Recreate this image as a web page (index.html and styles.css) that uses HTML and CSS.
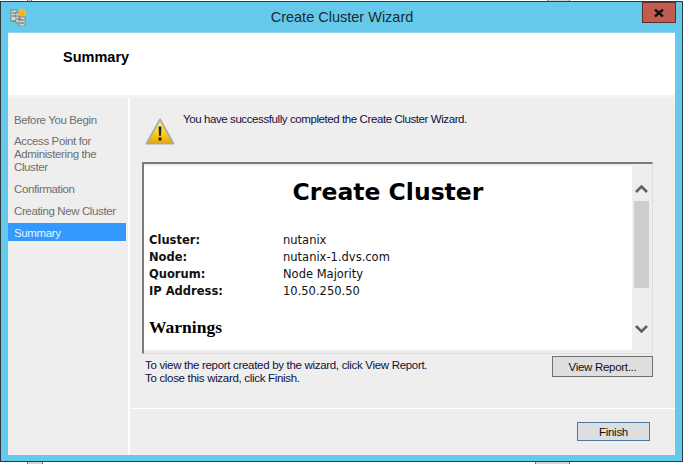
FILE: index.html
```html
<!DOCTYPE html>
<html lang="en">
<head>
<meta charset="utf-8">
<title>Create Cluster Wizard</title>
<link rel="stylesheet" href="styles.css">
</head>
<body>
<span class="peek peek-tl"></span>
<span class="peek peek-tr"></span>
<div class="window">
  <div class="titlebar">
    <svg class="app-icon" width="17" height="18" viewBox="0 0 17 18">
      <rect x="1" y="2" width="6" height="11" fill="#d8dcd8" stroke="#7c8480"/>
      <rect x="6" y="5" width="6" height="10" fill="#e4e6e2" stroke="#7c8480"/>
      <rect x="9" y="9" width="6" height="9" fill="#d8dad6" stroke="#7c8480"/>
      <path d="M2 5h4M2 8h4M7 8h4M7 11h4M10 12h4M10 15h4" stroke="#555c58"/>
      <rect x="3" y="12" width="2" height="2" fill="#4cab3c"/>
      <circle cx="12" cy="5" r="3.6" fill="#f5b324"/>
      <path d="M12 0v2M16.500 5h-2M15 2l-1 1M9 2l1 1M15 8l-1-1" stroke="#f8c846"/>
    </svg>
    <div class="title">Create Cluster Wizard</div>
    <div class="close"><svg width="10" height="8" viewBox="0 0 10 8"><path d="M1 .5l8 7M9 .5l-8 7" stroke="#111" stroke-width="2.400" fill="none"/></svg></div>
  </div>
  <div class="client">
    <header class="header"><h1 class="heading">Summary</h1></header>
    <div class="body">
      <nav class="steps">
        <div class="step">Before You Begin</div>
        <div class="step">Access Point for Administering the Cluster</div>
        <div class="step">Confirmation</div>
        <div class="step step-last">Creating New Cluster</div>
        <div class="step current">Summary</div>
      </nav>
      <main class="panel">
        <div class="top">
          <div class="message">
            <svg class="warn" width="30" height="28" viewBox="0 0 32 30">
              <defs><linearGradient id="y" x1="0" y1="0" x2="0" y2="1"><stop offset="0" stop-color="#fff3a0"/><stop offset=".5" stop-color="#fcd320"/><stop offset="1" stop-color="#eda500"/></linearGradient></defs>
              <path d="M16 1.500L30.500 27.500H1.500Z" fill="url(#y)" stroke="#a9a9a9" stroke-width="2" stroke-linejoin="round"/>
              <path d="M14.500 9h3l-.5 10h-2Z" fill="#222"/>
              <circle cx="16" cy="22.500" r="1.800" fill="#222"/>
            </svg>
            <p class="message-text">You have successfully completed the Create Cluster Wizard.</p>
          </div>
          <div class="report">
            <div class="report-inner">
              <div class="doc">
                <h2 class="doc-title">Create Cluster</h2>
                <dl class="facts">
                  <dt>Cluster:</dt><dd>nutanix</dd>
                  <dt>Node:</dt><dd>nutanix-1.dvs.com</dd>
                  <dt>Quorum:</dt><dd>Node Majority</dd>
                  <dt>IP Address:</dt><dd>10.50.250.50</dd>
                </dl>
                <h3 class="doc-sub">Warnings</h3>
              </div>
              <div class="scrollbar">
                <svg class="arrow" width="15" height="12" viewBox="0 0 15 12"><path d="M2 9l5.500-5.500L13 9" fill="none" stroke="#606060" stroke-width="2.600"/></svg>
                <div class="thumb"></div>
                <svg class="arrow arrow-down" width="15" height="12" viewBox="0 0 15 12"><path d="M2 3l5.500 5.500L13 3" fill="none" stroke="#606060" stroke-width="2.600"/></svg>
              </div>
            </div>
          </div>
          <div class="under">
            <p class="hint">To view the report created by the wizard, click View Report.<br>To close this wizard, click Finish.</p>
            <button class="btn btn-report" type="button">View Report...</button>
          </div>
        </div>
        <div class="bottom">
          <button class="btn btn-finish" type="button">Finish</button>
        </div>
      </main>
    </div>
  </div>
</div>
<span class="peek peek-bl"></span>
<span class="peek peek-br"></span>
</body>
</html>
```
FILE: styles.css
```css
* { box-sizing: border-box; }
html, body { margin: 0; padding: 0; background: #fff; }
body { position: relative; width: 683px; height: 464px; overflow: hidden; font-family: "Liberation Sans", Arial, sans-serif; }

.peek { position: absolute; height: 2px; background: #d4d4d4; border-left: 1px solid #777; border-right: 1px solid #777; }
.peek-tl { left: 27px; top: 0; width: 5px; height: 1px; }
.peek-tr { left: 547px; top: 0; width: 23px; height: 1px; }
.peek-bl { left: 27px; top: 462px; width: 16px; }
.peek-br { left: 535px; top: 462px; width: 35px; }

.window {
  margin-top: 1px;
  width: 683px;
  height: 461px;
  border: 1px solid #2d3a42;
  background: #65c9ec;
  padding: 0 7px 6px 7px;
  display: flex;
  flex-direction: column;
}

.titlebar { height: 30px; flex: none; display: flex; position: relative; justify-content: center; }
.app-icon { position: absolute; left: 2px; top: 6px; }
.title { font-size: 14.500px; line-height: 31px; color: #1d2a33; padding-left: 1px; }
.close {
  position: absolute; right: -1px; top: 0;
  width: 34px; height: 21px;
  background: #c25b50;
  border: 1px solid #5c2f2a;
  display: flex; align-items: center; justify-content: center;
}

.client { flex: 1; display: flex; flex-direction: column; background: #eee; min-height: 0; }
.header { height: 63px; flex: none; background: #fff; border-top: 1px solid #8fd3ec; padding: 15px 0 0 55px; }
.heading { margin: 0; font-size: 14.500px; line-height: 18px; font-weight: bold; color: #000; }

.body { flex: 1; display: flex; border-top: 3px solid #f3f3f3; min-height: 0; }
.steps { width: 120px; flex: none; padding-top: 16px; font-size: 11.500px; letter-spacing: -.38px; color: #6f6f6f; }
.step { line-height: 13px; padding: 0 6px; margin-bottom: 8px; }
.step:nth-child(n+2) { margin-bottom: 9px; }
.step.step-last { margin-bottom: 8px; }
.step.current { background: #3399ff; color: #e8f3ff; height: 18px; line-height: 20px; margin: -3px 2px 0 0; }

.panel { flex: 1; border-left: 2px solid #fff; display: flex; flex-direction: column; min-width: 0; }
.top { height: 310px; flex: none; padding: 0 22px 0 12px; }
.message { height: 64px; display: flex; padding-top: 12px; gap: 8px; }
.warn { margin-top: 8px; margin-left: 3px; flex: none; }
.message-text { margin: 2px 0 0; font-size: 11.500px; letter-spacing: -.41px; line-height: 14px; color: #10103a; }

.report {
  width: 511px; height: 192px;
  border-style: solid; border-width: 2px 1px 1px 2px;
  border-color: #7a7a7a #dedede #dedede #7a7a7a;
  padding: 2px 0 3px 0;
}
.report-inner { display: flex; height: 100%; }
.doc { width: 488px; background: #fff; padding: 0 0 0 5px; overflow: hidden; }
.doc-title { margin: 9px 0 0; font: bold 23.500px/34px "DejaVu Sans", Verdana, sans-serif; text-align: center; color: #000; padding-right: 5px; }
.facts {
  margin: 23px 0 0;
  display: grid; grid-template-columns: 134px 1fr;
  font: 11.500px/17px "DejaVu Sans", Verdana, sans-serif; color: #111;
}
.facts dt { font-weight: bold; }
.facts dd { margin: 0; }
.doc-sub { margin: 17px 0 0; font: bold 17.500px/20px "Liberation Serif", "Times New Roman", serif; color: #000; }

.scrollbar { width: 17px; padding-left: 1px; display: flex; flex-direction: column; align-items: center; }
.arrow { flex: none; margin-top: 17px; }
.thumb { width: 15px; height: 87px; background: #cdcdcd; margin-top: 6px; }
.arrow-down { margin-top: auto; margin-bottom: 15px; }

.under { display: flex; justify-content: space-between; align-items: flex-start; padding-top: 2px; width: 511px; }
.hint { margin: 3px 0 0 3px; font-size: 11.500px; letter-spacing: -.31px; line-height: 13px; color: #10103a; }
.btn {
  font: 11.500px "Liberation Sans", Arial, sans-serif; letter-spacing: -.3px; color: #111;
  background: #dedede; padding: 0; border-radius: 0;
}
.btn-report { width: 101px; height: 21px; border: 1px solid #707070; }

.bottom { flex: 1; border-top: 1px solid #fff; display: flex; justify-content: flex-end; padding: 13px 25px 0 0; }
.btn-finish { width: 73px; height: 19px; border: 1px solid #4a7ba6; }
```
